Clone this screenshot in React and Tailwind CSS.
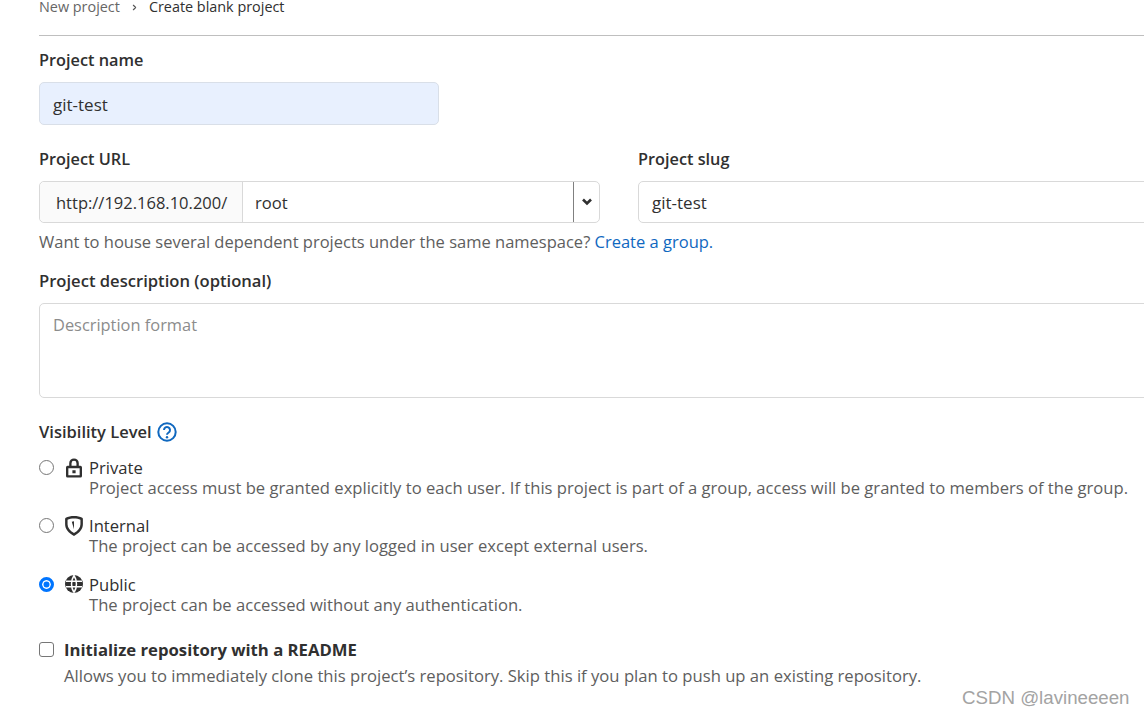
import { ChevronRight } from 'lucide-react'

function LockIcon() {
  return (
    <svg width="16" height="20" viewBox="1.500 1 15 18" className="ml-[2px] text-[#303030]">
      <path fill="currentColor" fillRule="evenodd" d="M4.500 8V5.500a4.500 4.500 0 0 1 9 0V8H15a1.500 1.500 0 0 1 1.500 1.500v8A1.500 1.500 0 0 1 15 19H3a1.500 1.500 0 0 1-1.500-1.500v-8A1.500 1.500 0 0 1 3 8h1.500zm2.200 0h4.600V5.500a2.300 2.300 0 0 0-4.600 0V8zM3.700 10.200v6.600h10.600v-6.600H3.700zM7.500 12h3v3h-3v-3z" />
    </svg>
  )
}

function ShieldIcon() {
  return (
    <svg width="18" height="20" viewBox="1 .8 16 18" className="ml-[1px] text-[#303030]">
      <path fill="currentColor" fillRule="evenodd" d="M9 .800c2.800 0 5.500.6 7.400 1.600.4.200.6.600.6 1v4.800c0 4.200-3 8-8 10.500-5-2.500-8-6.300-8-10.500V3.400c0-.4.200-.8.600-1C3.500 1.400 6.200.800 9 .800zm0 2.200c-2.200 0-4.300.4-5.800 1.100v4.100c0 3 2.100 5.800 5.800 8 3.700-2.200 5.800-5 5.800-8V4.100C13.300 3.400 11.200 3 9 3zm0 2.500v7.300L7 6l2-.5z" />
    </svg>
  )
}

function GlobeIcon() {
  return (
    <svg width="18" height="18" viewBox="0 0 18 18" className="ml-[1px] text-[#303030]">
      <circle cx="9" cy="9" r="9" fill="currentColor" />
      <path d="M1 6.300h16M1 11.700h16M9 .500C5.700 5.500 5.700 12.500 9 17.500M9 .500c3.300 5 3.300 12 0 17" fill="none" stroke="#fff" strokeWidth="1.500" />
    </svg>
  )
}

function HelpIcon() {
  return (
    <svg width="20" height="20" viewBox="0 0 20 20" className="text-[#1068bf]">
      <circle cx="10" cy="10" r="8.700" fill="none" stroke="currentColor" strokeWidth="2" />
      <path d="M7 8a3 3 0 1 1 4.700 2.500c-1 .7-1.700 1.200-1.700 2.300" fill="none" stroke="currentColor" strokeWidth="2" />
      <circle cx="10" cy="15.200" r="1.200" fill="currentColor" />
    </svg>
  )
}

function Radio({ checked }) {
  if (checked) {
    return <span className="block w-[15px] h-[15px] rounded-full border-[3px] border-[#0075ff] bg-[#0075ff] shadow-[inset_0_0_0_1.500px_#fff]" />
  }
  return <span className="block w-[15px] h-[15px] rounded-full border border-[#767676] bg-white" />
}

const levels = [
  { name: 'Private', desc: 'Project access must be granted explicitly to each user. If this project is part of a group, access will be granted to members of the group.', Icon: LockIcon, mt: 'mt-[14px]' },
  { name: 'Internal', desc: 'The project can be accessed by any logged in user except external users.', Icon: ShieldIcon, mt: 'mt-[18px]' },
  { name: 'Public', desc: 'The project can be accessed without any authentication.', Icon: GlobeIcon, checked: true, mt: 'mt-[19px]' },
]

export default function App() {
  return (
    <div className="relative w-[1144px] h-[714px] overflow-hidden bg-white pl-[39px] font-['Open_Sans',sans-serif] text-[16.600px] text-[#303030]">
      {/* Breadcrumb, cut off by the top of the page */}
      <div className="h-[35px] flex items-start">
        <div className="flex items-center h-[14px] text-[14.400px] leading-[14px]">
          <span className="text-[#666666]">New project</span>
          <ChevronRight size={9} strokeWidth={3} className="mx-[10px] text-[#555555]" />
          <span className="text-[#303030] font-medium">Create blank project</span>
        </div>
      </div>
      <div className="border-t border-[#bfbfbf]" />

      <label className="block mt-[12px] h-[24px] leading-[24px] font-semibold text-[16.300px]">Project name</label>
      <div className="mt-[10px] w-[400px] h-[43px] flex items-center px-[13px] pt-[3px] bg-[#e8f0fe] border border-[#d9dfe8] rounded-[5px] text-[17px]">git-test</div>

      <div className="flex mt-[22px]">
        <div className="w-[561px] shrink-0">
          <label className="block h-[24px] leading-[24px] font-semibold text-[16.300px]">Project URL</label>
          <div className="mt-[10px] flex h-[42px] border border-[#d9d9d9] rounded-[5px]">
            <div className="w-[203px] flex items-center pl-[16px] pt-[2px] bg-[#fafafa] border-r border-[#d9d9d9] rounded-l-[5px] whitespace-nowrap text-[16.500px]">http://192.168.10.200/</div>
            <div className="flex-1 flex items-center pl-[12px] pt-[2px] border-r border-[#808080]">root</div>
            <div className="w-[25px] flex items-center justify-center">
              <svg width="10" height="8" viewBox="0 0 10 8"><path d="M1 1.500l4 4 4-4" fill="none" stroke="#303030" strokeWidth="2.600" /></svg>
            </div>
          </div>
        </div>
        <div className="ml-[38px] flex-1 min-w-[560px]">
          <label className="block h-[24px] leading-[24px] font-semibold text-[16.300px]">Project slug</label>
          <div className="mt-[10px] h-[42px] flex items-center pl-[13px] pt-[2px] border border-[#d9d9d9] rounded-l-[5px] text-[17px]">git-test</div>
        </div>
      </div>

      <p className="mt-[7px] h-[24px] leading-[24px] text-[#5e5e5e] text-[16.500px]">
        Want to house several dependent projects under the same namespace? <span className="text-[#1068bf]">Create a group.</span>
      </p>

      <label className="block mt-[15px] h-[24px] leading-[24px] font-semibold text-[16.600px]">Project description (optional)</label>
      <div className="mt-[10px] w-[1200px] h-[95px] px-[13px] pt-[9px] border border-[#d9d9d9] rounded-[5px] text-[#8c8c8c] text-[16.400px]">Description format</div>

      <div className="mt-[22px] h-[24px] flex items-center gap-[5px]">
        <span className="font-semibold text-[16.500px]">Visibility Level</span>
        <HelpIcon />
      </div>

      {levels.map(({ name, desc, Icon, checked, mt }) => (
        <div key={name} className={`${mt} flex`}>
          <div className="w-[25px] shrink-0 pt-[2px]"><Radio checked={checked} /></div>
          <div className="w-[25px] shrink-0"><Icon /></div>
          <div className="leading-[20px]">
            <div>{name}</div>
            <div className="text-[#5e5e5e] whitespace-nowrap">{desc}</div>
          </div>
        </div>
      ))}

      <div className="mt-[23px] flex">
        <div className="w-[25px] shrink-0 pt-[4px]">
          <span className="block w-[15px] h-[15px] rounded-[3px] border border-[#767676] bg-white" />
        </div>
        <div>
          <div className="leading-[24px] font-bold text-[16.700px]">Initialize repository with a README</div>
          <div className="mt-[2px] leading-[24px] text-[#5e5e5e] text-[16.650px]">Allows you to immediately clone this project’s repository. Skip this if you plan to push up an existing repository.</div>
        </div>
      </div>

      {/* Watermark over the page corner */}
      <div className="absolute left-[962px] top-[687px] font-['Liberation_Sans',sans-serif] text-[18.700px] leading-[22px] text-[#a3a3a3] whitespace-nowrap">CSDN @lavineeeen</div>
    </div>
  )
}
